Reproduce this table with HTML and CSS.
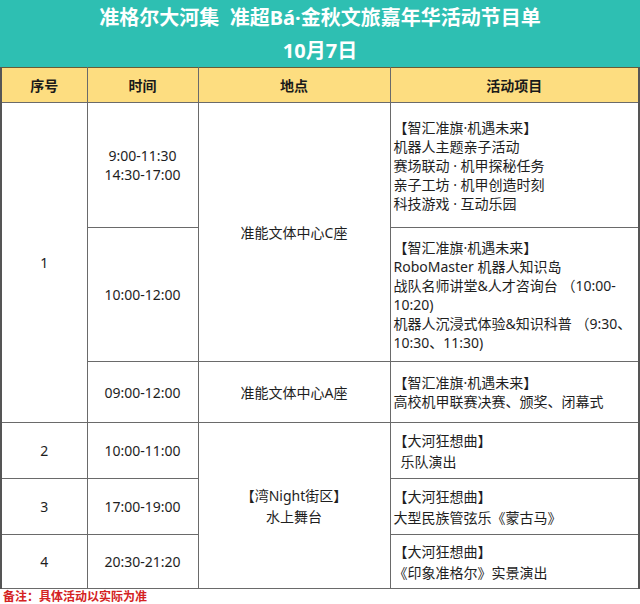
FILE: index.html
```html
<!DOCTYPE html>
<html lang="zh-CN">
<head>
<meta charset="utf-8">
<title>活动节目单</title>
<link rel="stylesheet" href="styles.css">
</head>
<body>
<div class="banner">
  <div class="banner-line">准格尔大河集&nbsp;&nbsp;准超Bá·金秋文旅嘉年华活动节目单</div>
  <div class="banner-line">10月7日</div>
</div>
<table class="schedule">
  <colgroup>
    <col class="c-seq">
    <col class="c-time">
    <col class="c-place">
    <col class="c-act">
  </colgroup>
  <thead>
    <tr class="head-row">
      <th class="seq">序号</th>
      <th>时间</th>
      <th>地点</th>
      <th class="act-h">活动项目</th>
    </tr>
  </thead>
  <tbody>
    <tr class="r-a">
      <td class="seq" rowspan="3">1</td>
      <td class="tight">9:00-11:30<br>14:30-17:00</td>
      <td rowspan="2">准能文体中心C座</td>
      <td class="act tight">【智汇准旗·机遇未来】<br>机器人主题亲子活动<br>赛场联动 · 机甲探秘任务<br>亲子工坊 · 机甲创造时刻<br>科技游戏 · 互动乐园</td>
    </tr>
    <tr class="r-b">
      <td>10:00-12:00</td>
      <td class="act tight">【智汇准旗·机遇未来】<br>RoboMaster 机器人知识岛<br>战队名师讲堂&amp;人才咨询台 （10:00-<br>10:20)<br>机器人沉浸式体验&amp;知识科普 （9:30、<br>10:30、11:30)</td>
    </tr>
    <tr class="r-c">
      <td>09:00-12:00</td>
      <td>准能文体中心A座</td>
      <td class="act tight">【智汇准旗·机遇未来】<br>高校机甲联赛决赛、颁奖、闭幕式</td>
    </tr>
    <tr class="r-d">
      <td class="seq">2</td>
      <td>10:00-11:00</td>
      <td rowspan="3" class="loose">【湾Night街区】<br>水上舞台</td>
      <td class="act loose">【大河狂想曲】<br><span class="indent">乐队演出</span></td>
    </tr>
    <tr class="r-d">
      <td class="seq">3</td>
      <td>17:00-19:00</td>
      <td class="act loose">【大河狂想曲】<br>大型民族管弦乐《蒙古马》</td>
    </tr>
    <tr class="r-f">
      <td class="seq">4</td>
      <td>20:30-21:20</td>
      <td class="act loose">【大河狂想曲】<br>《印象准格尔》实景演出</td>
    </tr>
  </tbody>
</table>
<div class="note">备注：具体活动以实际为准</div>
</body>
</html>
```

FILE: styles.css
```css
html, body {
  margin: 0;
  padding: 0;
  background: #ffffff;
}
body {
  width: 640px;
  height: 604px;
  font-family: "Noto Sans", "Noto Sans CJK SC", sans-serif;
  color: #1e1e1e;
  overflow: hidden;
}
.banner {
  background: #2ebfb2;
  height: 67px;
  display: flex;
  flex-direction: column;
  align-items: center;
  color: #ffffff;
  font-weight: 700;
  font-size: 20px;
}
.banner-line {
  height: 33px;
  line-height: 35px;
}
.banner-line + .banner-line {
  height: 34px;
  line-height: 36px;
}
.schedule {
  border-collapse: collapse;
  width: 638px;
  table-layout: fixed;
  font-size: 14px;
}
.c-seq { width: 86px; }
.c-time { width: 111px; }
.c-place { width: 192px; }
.c-act { width: 249px; }
.schedule th,
.schedule td {
  border: 1px solid #6a6a6a;
  text-align: center;
  vertical-align: middle;
  padding: 0;
  line-height: 19px;
}
.schedule .seq { border-left: 2px solid #555; }
.schedule .act-h,
.schedule td.act { border-right: 2px solid #555; }
.head-row th {
  background: #fddd80;
  font-weight: 700;
  height: 34px;
  border-top: 1px solid #6b5a34;
  color: #1a1a1a;
}
.r-a td { height: 124px; }
.r-b td { height: 133px; }
.r-c td { height: 60px; }
.r-d td { height: 55px; }
.r-f td { height: 53px; }
.schedule td.act {
  text-align: left;
  padding: 0 3px 0 3px;
}
.tight { line-height: 19px; }
.schedule td.loose { line-height: 21px; }
.indent { padding-left: 7px; }
.note {
  color: #d42222;
  font-weight: 700;
  font-size: 12px;
  line-height: 13px;
  padding: 0 0 0 3px;
  font-family: "Noto Sans CJK SC", serif;
}
```
